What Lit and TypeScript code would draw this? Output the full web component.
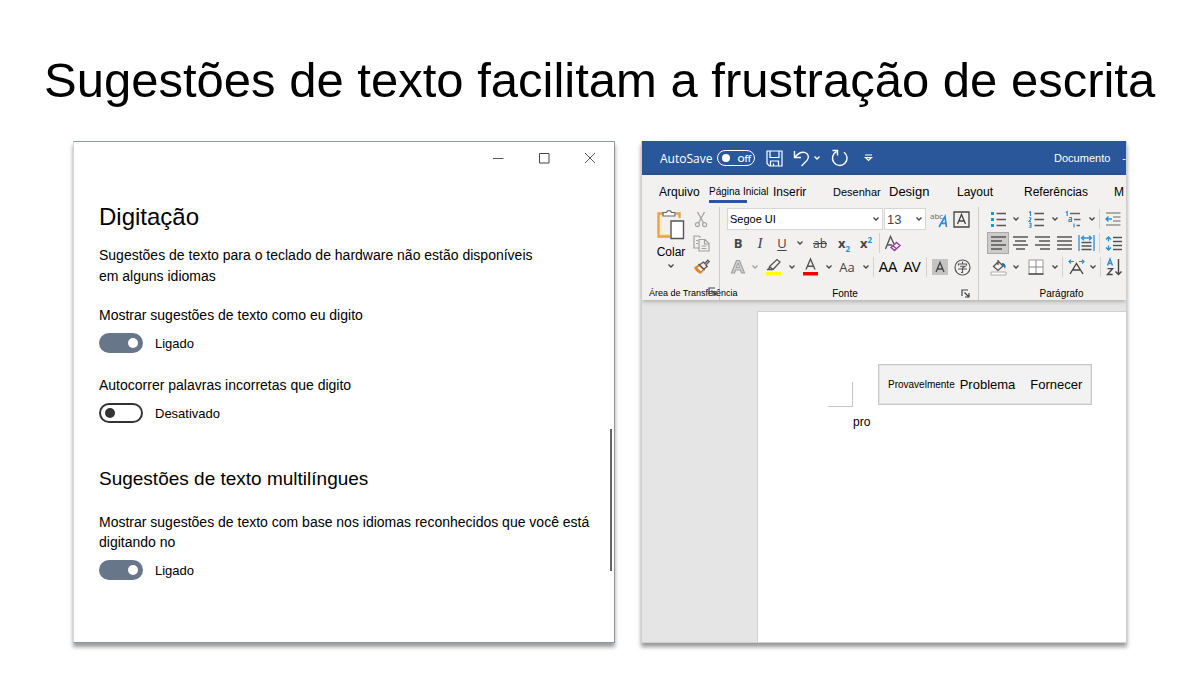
import { LitElement, html, css, svg } from "lit";
import { customElement, property } from "lit/decorators.js";

const line = (d: string, color = "#444", w = 1.3) =>
  svg`<path d=${d} fill="none" stroke=${color} stroke-width=${w}></path>`;

const shape = (d: string, color = "#444") => svg`<path d=${d} fill=${color}></path>`;

const icon = (w: number, h: number, body: unknown) =>
  html`<svg width=${w} height=${h} viewBox="0 0 ${w} ${h}" aria-hidden="true">${body}</svg>`;

const chevron = (color = "#444") => icon(8, 6, line("M1.500 1.500 4 4 6.500 1.500", color, 1.3));

const BLUE = "#2b8fd6";

const icons = {
  save: icon(17, 17, line("M1 1h15v15H3.5L1 13.5zM4 1v6.500h9V1M4.500 16v-5h8v5M7.500 16v-2.500", "#fff", 1.2)),
  undo: icon(17, 17, line("M1.500 1v6.500h6.500M1.800 7.200C5 3.500 8 1.600 11.500 2.400c4 1 5 5 2.500 8L8.500 16", "#fff", 1.4)),
  redo: icon(18, 18, line("M5.500 2.600A7.300 7.300 0 1 0 13 3.200M1.500 1.500h5v5", "#fff", 1.4)),
  customize: icon(9, 8, line("M1 1h7M1.500 3.600 4.500 6.400 7.500 3.600z", "#fff", 1.2)),
  paste: icon(30, 32, svg`
    ${line("M8 4.500H2.500v23H14M20 4.500h3.500V9", "#e8a33d", 2.4)}
    ${line("M5 6.500v19h9", "#fbe3b8", 1)}
    <path d="M7 7V3.500h3.500a2.600 2.600 0 0 1 5 0H19V7z" fill="#fff" stroke="#666" stroke-width="1.200"></path>
    <path d="M15 12h12.500v17.500H15z" fill="#fff" stroke="#555" stroke-width="1.400"></path>`),
  cut: icon(14, 17, svg`${line("M3.500 1 9.500 12M10.500 1 4.500 12", "#a6a6a6", 1.4)}
    <circle cx="3.400" cy="13.600" r="2" fill="none" stroke="#a6a6a6" stroke-width="1.200"></circle>
    <circle cx="10.600" cy="13.600" r="2" fill="none" stroke="#a6a6a6" stroke-width="1.200"></circle>`),
  copy: icon(17, 17, line("M6 13H1V1h5l1.500 1.500M6 4.500h6l4 4V16H6zM11.500 4.500V9H16M8.500 11h5M8.500 13.500h5M3 5.500h2M3 8.500h2", "#a0a0a0", 1.2)),
  brush: icon(17, 16, svg`${shape("M1 8.500 5.500 5.500 11.500 11 7.500 15C5.500 13.500 3 13 1 8.500z", "#e8832a")}
    ${shape("M4.500 8.800 6.500 7.500 9.500 10.500 7.800 12.300z", "#fff")}
    ${line("M5.500 5 11.800 11M6.800 5.800 10.300 3 11.800 4.500 14.800 1.200 16.200 2.600 12.800 6 14.200 7.500 10.800 10", "#555", 1.3)}`),
  abcA: icon(18, 18, svg`<text class="tiny" x="0" y="9" fill="#666">abc</text>
    ${line("M9 17 15 6.500 16.500 17M11.300 13.400h4.500", BLUE, 1.7)}`),
  boxedA: icon(17, 17, line("M1 1h15v15H1zM4.500 13 8.500 3.500 12.500 13M5.800 10h5.400", "#444", 1.3)),
  eraser: icon(18, 17, svg`${line("M1.500 14 6.500 1.500 10 9M3.200 10h5", "#555", 1.4)}
    ${line("M7 12.500 12.500 7.500 16 10.500 10.500 15.500zM9 10.800l3.500 3", "#9b3fa5", 1.4)}`),
  outlineA: icon(16, 16, svg`<path d="M1.500 14 6.500 1.500h3L14.500 14H11.500L10.500 11h-5L4.500 14z" fill="#d2d2d2" stroke="#a0a0a0" stroke-width="1.200"></path>
    <path d="M6.300 8.500h3.400L8 4z" fill="#f3f1f0" stroke="#a0a0a0"></path>`),
  highlight: icon(17, 18, svg`<path d="M1 14h15v3.500H1z" fill="#ffff00"></path>
    ${line("M4.500 8.500 12 1.500 15 4 8 11.500H4zM5 9l3 2.500M2 12l2.500-2", "#555", 1.3)}`),
  colorA: icon(17, 18, svg`<path d="M1 14h15v3.500H1z" fill="#f00000"></path>
    ${line("M4 11.500 8.500 1 13 11.500M5.500 8.200h6", "#555", 1.4)}`),
  shadedA: icon(16, 16, svg`<path d="M0 0h16v16H0z" fill="#c4c4c4"></path>${line("M4 13 8 3.500 12 13M5.500 10h5", "#444", 1.3)}`),
  circled: icon(17, 17, svg`<circle cx="8.500" cy="8.500" r="7.500" fill="none" stroke="#555" stroke-width="1.200"></circle>
    ${line("M8.500 2.500v2M4.500 6.500v-1.500h8v1.500M6 7.300h5L8.500 9v4.500H7M4 10h9", "#555", 1.1)}`),
  bullets: icon(17, 15, svg`${shape("M1 0h3v3H1zM1 6h3v3H1zM1 12h3v3H1z", BLUE)}${line("M6.500 1.500H16M6.500 7.500H16M6.500 13.500H16", "#555", 1.3)}`),
  numbers: icon(17, 17, svg`${line("M1 1.500 2.500.6V5M.8 6.700h2v1.500L1 10.500h2M1 12.300h2v4H.8M1.500 14.300h1.500", BLUE, 1.1)}
    ${line("M6.500 2.500H16M6.500 8.500H16M6.500 14.500H16", "#555", 1.3)}`),
  multi: icon(17, 17, svg`${line("M.8 1.500 2.200.6V5M4 6.500h2.500v4H4V8.500h2.500M9 12.500v4", BLUE, 1.2)}
    ${line("M5 2.500h10M9 8.500h6.500M11.500 14.500H15", "#666", 1.3)}`),
  outdent: icon(16, 14, svg`${line("M1 1h14.500M8 5h7.500M8 9h7.500M1 13h14.500", "#666", 1.2)}${line("M7 7H1M3.500 4.500 1 7l2.500 2.500", BLUE, 1.3)}`),
  left: icon(15, 14, line("M0 1h15M0 5h11M0 9h15M0 13h11", "#555", 1.3)),
  center: icon(15, 14, line("M0 1h15M2 5h11M0 9h15M3 13h9", "#555", 1.3)),
  right: icon(15, 14, line("M0 1h15M4 5h11M0 9h15M5 13h10", "#555", 1.3)),
  justify: icon(15, 14, line("M0 1h15M0 5h15M0 9h15M0 13h15", "#555", 1.3)),
  distribute: icon(17, 16, svg`${line("M1 0v16M16 0v16M3.500 3h10M6 .6 3.500 3 6 5.400M11 .6 13.500 3 11 5.400", BLUE, 1.3)}
    ${line("M3.500 7.500h10M3.500 11h10M3.500 14.500h10", "#555", 1.3)}`),
  spacing: icon(17, 15, svg`${line("M3.500 1v4.500M3.500 9.500V14M1 3.500 3.500 1 6 3.500M1 11.500 3.500 14 6 11.500", BLUE, 1.4)}
    ${line("M8 1.500h9M8 5.500h9M8 9.500h9M8 13.500h9", "#555", 1.3)}`),
  bucket: icon(17, 17, svg`${line("M3.500 7.500 8.500 2.500 13 7 8 11.500zM8 1v5", "#555", 1.3)}
    ${shape("M12 4c3 0 4.500 2.500 3 6-1-2-1-3-3-3.500z", "#2372a8")}
    <path d="M1 13h15v3H1z" fill="#fff" stroke="#aaa"></path>`),
  borders: icon(16, 16, svg`<path d="M1 1h14v14H1z" fill="#fff" stroke="#999"></path>${line("M8 1v14M1 8h14", "#888", 1)}${line("M.5 15h15", "#444", 1.4)}`),
  scaleA: icon(17, 16, svg`${line("M2 15 8.500 4.500 15 15M5 11h7", "#444", 1.4)}
    ${line("M6 2.500H1M3 .6 1 2.500l2 2M11 2.500h5M14 .6l2 1.900-2 2", BLUE, 1.2)}`),
  sort: icon(17, 18, svg`${line("M1.500 7.500 4 1l2.500 6.500M2.400 5.500h3.200", BLUE, 1.4)}
    ${line("M1.500 10.600h5L1.500 16.500h5.200M12.500 1v15.500M9.500 13.500l3 3 3-3", "#444", 1.4)}`),
  launcher: icon(9, 9, line("M1 7V1h6M3.500 3.500 8 8M8 4v4H4", "#444", 1.2)),
  minimize: icon(12, 12, line("M1 6.500h10.500", "#555", 1)),
  maximize: icon(12, 12, line("M1.500 1.500h9.500v9.500H1.500z", "#444", 1)),
  close: icon(12, 12, line("M1 1l10 10M11 1 1 11", "#555", 1)),
};

const base = css`
  * { box-sizing: border-box; }
  button, select, input { font: inherit; color: inherit; margin: 0; padding: 0; border: 0; background: none; }
  svg { display: block; flex: none; overflow: visible; }
`;

@customElement("toggle-row")
class ToggleRow extends LitElement {
  static styles = [base, css`
    :host { display: block; }
    .caption { margin: 0; line-height: 20px; font-size: 14px; }
    .row { display: flex; align-items: center; gap: 12px; margin-top: 8px; height: 20px; }
    .switch {
      appearance: none; flex: none; width: 44px; height: 20px; border-radius: 10px;
      border: 2px solid #333; background: #fff; display: flex; align-items: center; padding: 0 4px;
    }
    .switch::before { content: ""; width: 10px; height: 10px; border-radius: 50%; background: #333; }
    .switch:checked { justify-content: flex-end; background: #68768a; border-color: #68768a; padding: 0 3px; }
    .switch:checked::before { background: #fff; }
  `];
  @property() caption = "";
  @property() state = "";
  @property({ type: Boolean }) on = false;
  render() {
    return html`<p class="caption" id="caption">${this.caption}</p>
      <div class="row">
        <input class="switch" id="switch" type="checkbox" role="switch" aria-describedby="caption" .checked=${this.on}>
        <label for="switch">${this.state}</label>
      </div>`;
  }
}

@customElement("settings-window")
class SettingsWindow extends LitElement {
  static styles = [base, css`
    :host {
      display: flex; flex-direction: column; background: #fff; border: 1px solid #8d99a6; border-left-color: #d6d6d6;
      box-shadow: 0 4px 4px rgba(0, 0, 0, .4); color: #000; font-size: 13px; line-height: 21px;
    }
    .controls { display: flex; justify-content: flex-end; gap: 34px; padding: 10px 18px 0 0; }
    .body { padding: 37px 0 0 25px; display: flex; flex: 1; }
    .content { flex: 1; min-width: 0; }
    h2 { margin: 0; font-weight: 400; font-size: 24px; line-height: 32px; }
    h3 { margin: 45px 0 22px; font-weight: 400; font-size: 19px; line-height: 22px; }
    .note { margin: 12px 0 18px; max-width: 440px; font-size: 14px; }
    .gap { margin-top: 22px; }
    .thumb { width: 2px; height: 142px; background: #666; align-self: flex-end; margin: 0 2px 71px 0; }
  `];
  render() {
    return html`
      <div class="controls">
        <button aria-label="Minimizar">${icons.minimize}</button>
        <button aria-label="Maximizar">${icons.maximize}</button>
        <button aria-label="Fechar">${icons.close}</button>
      </div>
      <div class="body">
        <div class="content">
          <h2>Digitação</h2>
          <p class="note">Sugestões de texto para o teclado de hardware não estão disponíveis em alguns idiomas</p>
          <toggle-row caption="Mostrar sugestões de texto como eu digito" state="Ligado" on></toggle-row>
          <toggle-row class="gap" caption="Autocorrer palavras incorretas que digito" state="Desativado"></toggle-row>
          <h3>Sugestões de texto multilíngues</h3>
          <toggle-row caption="Mostrar sugestões de texto com base nos idiomas reconhecidos que você está digitando no" state="Ligado" on></toggle-row>
        </div>
        <div class="thumb"></div>
      </div>`;
  }
}

@customElement("word-window")
class WordWindow extends LitElement {
  static styles = [base, css`
    :host {
      display: flex; flex-direction: column; min-width: 0; overflow: hidden; background: #e5e5e5;
      border: solid #cfcfcf; border-width: 0 1px 1px; box-shadow: 0 4px 4px rgba(0, 0, 0, .4); color: #000; font-size: 12px;
    }
    .title { display: flex; align-items: center; height: 34px; flex: none; padding-left: 18px; background: #2a579a; color: #fff; overflow: hidden; }
    .auto { display: flex; align-items: center; gap: 5px; font-family: "Open Sans", sans-serif; font-size: 12px; }
    .off { display: flex; align-items: center; gap: 7px; width: 38px; height: 16px; padding-left: 4px; border: 1px solid #fff; border-radius: 8px; font-size: 9px; font-weight: 600; }
    .knob { width: 8px; height: 8px; border-radius: 50%; background: #fff; }
    .quick { display: flex; align-items: center; gap: 10px; padding-left: 11px; }
    .undo { display: flex; align-items: center; gap: 3px; }
    .last { padding-left: 5px; }
    .doc { margin-left: auto; display: flex; gap: 12px; white-space: nowrap; font-size: 11px; }
    .ribbon { background: #f3f1f0; flex: none; box-shadow: 0 1px 5px rgba(0, 0, 0, .3); }
    .tabs {
      display: grid; grid-template-columns: 50px 64px 60px 56px 68px 67px 90px 1fr; height: 32px;
      align-items: center; padding: 2px 0 0 17px; overflow: hidden;
    }
    .tab { text-align: left; white-space: nowrap; line-height: 18px; display: block; justify-self: start; font-size: 12px; }
    .t10 { font-size: 10px; }
    .t11 { font-size: 11px; }
    .t13 { font-size: 13px; }
    .current { background: linear-gradient(#2a579a, #2a579a) left bottom / 38px 3px no-repeat; line-height: 16px; padding: 3px 0; }
    .groups { display: flex; height: 93px; overflow: hidden; }
    .group { display: flex; flex-direction: column; flex: none; border-right: 1px solid #cfcdcc; }
    .clipboard { width: 78px; position: relative; }
    .font { width: 259px; }
    .paragraph { flex: 1; border: 0; }
    .row { display: flex; align-items: center; height: 24px; flex: none; }
    .font .row { padding-left: 7px; }
    .paragraph .row { padding-left: 8px; }
    .cell { display: flex; align-items: center; justify-content: center; flex: none; width: 22px; height: 22px; white-space: nowrap; color: #444; }
    .arrow { width: 14px; }
    .wide { width: 26px; }
    .slim { width: 11px; }
    .dark { color: #000; font-size: 14px; width: 24px; }
    .pressed { background: #cdcbca; outline: 1px solid #aaa; outline-offset: -1px; }
    .sep { width: 1px; height: 20px; background: #d4d2d1; margin: 0 2px; flex: none; }
    .tiny { font-family: "Open Sans", sans-serif; font-size: 8px; }
    .glyph { font-family: "Open Sans", sans-serif; font-size: 13px; }
    .bold { font-weight: 700; }
    .italic { font-style: italic; font-family: "Liberation Serif", serif; font-size: 15px; }
    .under { text-decoration: underline; text-underline-offset: 2px; }
    .strike { text-decoration: line-through; font-size: 12px; }
    sub, sup { font-size: 8px; color: #2b8fd6; line-height: 0; }
    .combo { display: flex; align-items: center; height: 22px; background: #fff; border: 1px solid #d8d6d5; padding: 0 2px; }
    .combo select { appearance: none; flex: 1; min-width: 0; height: 20px; outline: 0; }
    .family { width: 156px; font-size: 11px; }
    .size { width: 42px; margin: 0 2px 0 1px; font-size: 13px; color: #444; }
    .tools { display: flex; flex: none; height: 72px; padding-left: 15px; }
    .paste { display: flex; flex-direction: column; align-items: center; width: 28px; padding-top: 2px; line-height: 18px; gap: 2px; }
    .small { display: flex; flex-direction: column; padding-left: 5px; }
    .small .cell { height: 24px; }
    .foot { display: flex; align-items: center; justify-content: center; height: 14px; margin-top: auto; font-size: 10px; white-space: nowrap; }
    .clipboard .foot { justify-content: flex-start; padding-left: 7px; font-size: 9px; }
    .font .foot { display: grid; grid-template-columns: 1fr auto 1fr; padding: 0 8px 0 0; }
    .font .foot button { justify-self: end; }
    .paragraph .foot { padding-left: 18px; }
    .on-label { position: absolute; left: 66px; bottom: 4px; }
    .canvas { flex: 1; padding: 11px 0 0 115px; display: flex; }
    .page { flex: 1; background: #fff; border: 1px solid #d0d0d0; border-width: 1px 0 0 1px; padding: 52px 0 0 70px; }
    .line { display: flex; align-items: flex-start; gap: 25px; }
    .corner { width: 25px; height: 25px; margin-top: 18px; border: solid #c4c4c4; border-width: 0 1px 1px 0; }
    .suggest { display: flex; align-items: center; gap: 5px; width: 214px; height: 41px; padding-left: 9px; background: #f2f2f2; border: 1px solid #c8c8c8; box-shadow: 0 0 0 1px #e4e4e4 inset; }
    .third { margin-left: 10px; }
    .typed { margin: 7px 0 0 25px; line-height: 16px; }
  `];
  private cell(label: string, body: unknown, cls = "") {
    return html`<button class="cell ${cls}" aria-label=${label}>${body}</button>`;
  }
  private more(label: string, cls = "arrow", color = "#444") {
    return html`<button class="cell ${cls}" aria-label=${label}>${chevron(color)}</button>`;
  }
  render() {
    const sep = html`<span class="sep"></span>`;
    return html`
      <header class="title">
        <div class="auto"><span>AutoSave</span>
          <button class="off" role="switch" aria-checked="false" aria-label="AutoSave"><span class="knob"></span>Off</button></div>
        <div class="quick">
          <button aria-label="Salvar">${icons.save}</button>
          <div class="undo"><button aria-label="Desfazer">${icons.undo}</button><button aria-label="Opções de desfazer">${chevron("#fff")}</button></div>
          <button aria-label="Refazer">${icons.redo}</button>
          <button class="last" aria-label="Personalizar">${icons.customize}</button>
        </div>
        <div class="doc"><span>Documento</span><span>-</span></div>
      </header>
      <section class="ribbon">
        <nav class="tabs">
          <button class="tab">Arquivo</button>
          <button class="tab t10 current">Página Inicial</button>
          <button class="tab">Inserir</button>
          <button class="tab t11">Desenhar</button>
          <button class="tab t13">Design</button>
          <button class="tab">Layout</button>
          <button class="tab">Referências</button>
          <button class="tab">M</button>
        </nav>
        <div class="groups">
          <div class="group clipboard">
            <div class="tools">
              <button class="paste">${icons.paste}<span>Colar</span>${chevron()}</button>
              <div class="small">
                ${this.cell("Recortar", icons.cut)}${this.cell("Copiar", icons.copy)}${this.cell("Pincel de formatação", icons.brush)}
              </div>
            </div>
            <div class="foot">Área de Transferência</div>
            <button class="on-label" aria-label="Opções da área de transferência">${icons.launcher}</button>
          </div>
          <div class="group font">
            <div class="row">
              <label class="combo family"><select aria-label="Fonte"><option>Segoe UI</option></select>${chevron()}</label>
              <label class="combo size"><select aria-label="Tamanho"><option>13</option></select>${chevron()}</label>
              ${this.cell("Guia fonético", icons.abcA)}${this.cell("Borda de caractere", icons.boxedA)}
            </div>
            <div class="row">
              ${this.cell("Negrito", "B", "glyph bold")}${this.cell("Itálico", "I", "italic")}${this.cell("Sublinhado", "U", "glyph under")}
              ${this.more("Opções de sublinhado")}
              ${this.cell("Tachado", "ab", "glyph strike wide")}
              ${this.cell("Subscrito", html`<span>x<sub>2</sub></span>`, "glyph bold")}
              ${this.cell("Sobrescrito", html`<span>x<sup>2</sup></span>`, "glyph bold")}
              ${sep}${this.cell("Limpar formatação", icons.eraser)}
            </div>
            <div class="row">
              ${this.cell("Efeitos de texto", icons.outlineA)}${this.more("Opções de efeitos", "slim", "#a0a0a0")}
              ${this.cell("Realce", icons.highlight, "wide")}${this.more("Cores de realce", "slim")}
              ${this.cell("Cor da fonte", icons.colorA, "wide")}${this.more("Cores da fonte", "slim")}
              ${this.cell("Maiúsculas", "Aa", "glyph wide")}${this.more("Opções de maiúsculas", "slim")}
              ${sep}
              ${this.cell("Aumentar", "AA", "dark")}${this.cell("Espaçamento", "AV", "dark")}
              ${sep}
              ${this.cell("Sombreamento de caractere", icons.shadedA)}${this.cell("Caractere circulado", icons.circled)}
            </div>
            <div class="foot"><span></span><span>Fonte</span><button aria-label="Opções de fonte">${icons.launcher}</button></div>
          </div>
          <div class="group paragraph">
            <div class="row">
              ${this.cell("Marcadores", icons.bullets)}${this.more("Tipos de marcadores")}
              ${this.cell("Numeração", icons.numbers, "wide")}${this.more("Tipos de numeração", "slim")}
              ${this.cell("Vários níveis", icons.multi, "wide")}${this.more("Tipos de lista", "slim")}
              ${sep}${this.cell("Diminuir recuo", icons.outdent)}
            </div>
            <div class="row">
              ${this.cell("Esquerda", icons.left, "pressed")}${this.cell("Centro", icons.center)}${this.cell("Direita", icons.right)}
              ${this.cell("Justificar", icons.justify)}${this.cell("Distribuir", icons.distribute)}
              ${sep}${this.cell("Espaçamento entre linhas", icons.spacing)}
            </div>
            <div class="row">
              ${this.cell("Preenchimento", icons.bucket)}${this.more("Cores de preenchimento")}
              ${this.cell("Bordas", icons.borders, "wide")}${this.more("Tipos de borda", "slim")}
              ${sep}${this.cell("Layout asiático", icons.scaleA)}${this.more("Opções de layout", "slim")}
              ${sep}${this.cell("Classificar", icons.sort)}
            </div>
            <div class="foot">Parágrafo</div>
          </div>
        </div>
      </section>
      <main class="canvas">
        <div class="page">
          <div class="line">
            <span class="corner"></span>
            <div class="suggest">
              <button class="t10">Provavelmente</button>
              <button class="t13">Problema</button>
              <button class="t13 third">Fornecer</button>
            </div>
          </div>
          <p class="typed">pro</p>
        </div>
      </main>`;
  }
}

@customElement("app-root")
class AppRoot extends LitElement {
  static styles = css`
    :host {
      display: flex; flex-direction: column; min-height: 100vh; box-sizing: border-box;
      padding: 50px 73px 57px; background: #fff; font-family: "Liberation Sans", Arial, sans-serif;
    }
    h1 { margin: 0 -29px 31px; font-weight: 400; font-size: 49px; line-height: 60px; white-space: nowrap; color: #000; }
    .windows { flex: 1; display: grid; grid-template-columns: 542fr 486fr; gap: 26px; }
  `;
  render() {
    return html`
      <h1>Sugestões de texto facilitam a frustração de escrita</h1>
      <div class="windows">
        <settings-window></settings-window>
        <word-window></word-window>
      </div>`;
  }
}
